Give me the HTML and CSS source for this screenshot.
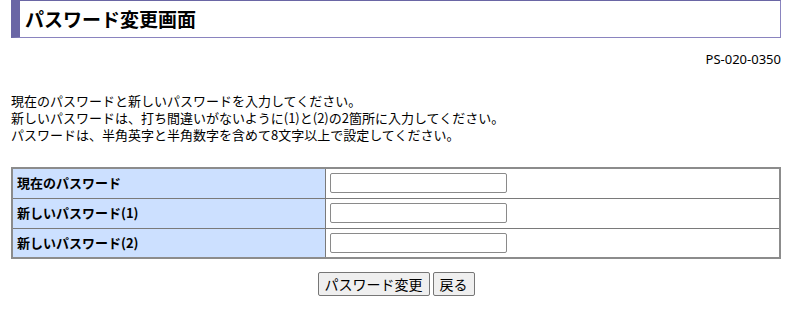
FILE: index.html
```html
<!DOCTYPE html>
<html lang="ja">
<head>
<meta charset="utf-8">
<title>パスワード変更画面</title>
<link rel="stylesheet" href="styles.css">
</head>
<body>
<div class="page">
  <h1 class="title">パスワード変更画面</h1>
  <div class="screen-id">PS-020-0350</div>
  <div class="guide">
    <p>現在のパスワードと新しいパスワードを入力してください。</p>
    <p>新しいパスワードは、打ち間違いがないように(1)と(2)の2箇所に入力してください。</p>
    <p>パスワードは、半角英字と半角数字を含めて8文字以上で設定してください。</p>
  </div>
  <table class="form-table">
    <tr>
      <th>現在のパスワード</th>
      <td><input type="password" class="field"></td>
    </tr>
    <tr>
      <th>新しいパスワード(1)</th>
      <td><input type="password" class="field"></td>
    </tr>
    <tr>
      <th>新しいパスワード(2)</th>
      <td><input type="password" class="field"></td>
    </tr>
  </table>
  <div class="actions">
    <button class="btn">パスワード変更</button>
    <button class="btn">戻る</button>
  </div>
</div>
</body>
</html>
```

FILE: styles.css
```css
html, body {
  margin: 0;
  padding: 0;
  background: #ffffff;
}
body {
  font-family: "Noto Sans CJK JP", sans-serif;
  color: #000;
  font-size: 13px;
}
.page {
  width: 770px;
  margin-left: 11px;
}
.title {
  margin: 0;
  height: 38px;
  box-sizing: border-box;
  border: 1px solid #8a84bf;
  border-left: 9px solid #6a66a5;
  border-top-color: #6a66a5;
  padding: 5px 0 0 5px;
  font-family: "Noto Sans CJK JP", sans-serif;
  font-size: 19px;
  font-weight: bold;
  line-height: 26px;
}
.screen-id {
  text-align: right;
  font-family: "Noto Sans", sans-serif;
  font-size: 13px;
  line-height: 16px;
  margin-top: 13px;
}
.guide {
  margin-top: 25px;
  line-height: 17px;
}
.guide p {
  margin: 0;
  line-height: 17px;
}
.form-table {
  margin-top: 24px;
  width: 770px;
  border-collapse: collapse;
  border: 2px solid #8c8c8c;
}
.form-table tr {
  height: 30px;
}
.form-table th,
.form-table td {
  border: 1px solid #7a7a7a;
  padding: 0 4px;
}
.form-table th {
  width: 304px;
  background: #cce0ff;
  text-align: left;
  font-size: 13px;
  font-weight: bold;
  line-height: 18px;
}
.form-table td {
  background: #fff;
}
.field {
  display: block;
  width: 177px;
  height: 20px;
  box-sizing: border-box;
  border: 1px solid #8a8a8a;
  border-radius: 2px;
  margin: 0;
  padding: 0 3px;
}
.actions {
  display: flex;
  justify-content: center;
  gap: 3px;
  margin-top: 13px;
}
.btn {
  font-family: "Noto Sans CJK JP", sans-serif;
  font-size: 14px;
  height: 24px;
  padding: 0 6px;
  background: #efefef;
  border: 1px solid #767676;
  border-radius: 2px;
  color: #000;
}
```
